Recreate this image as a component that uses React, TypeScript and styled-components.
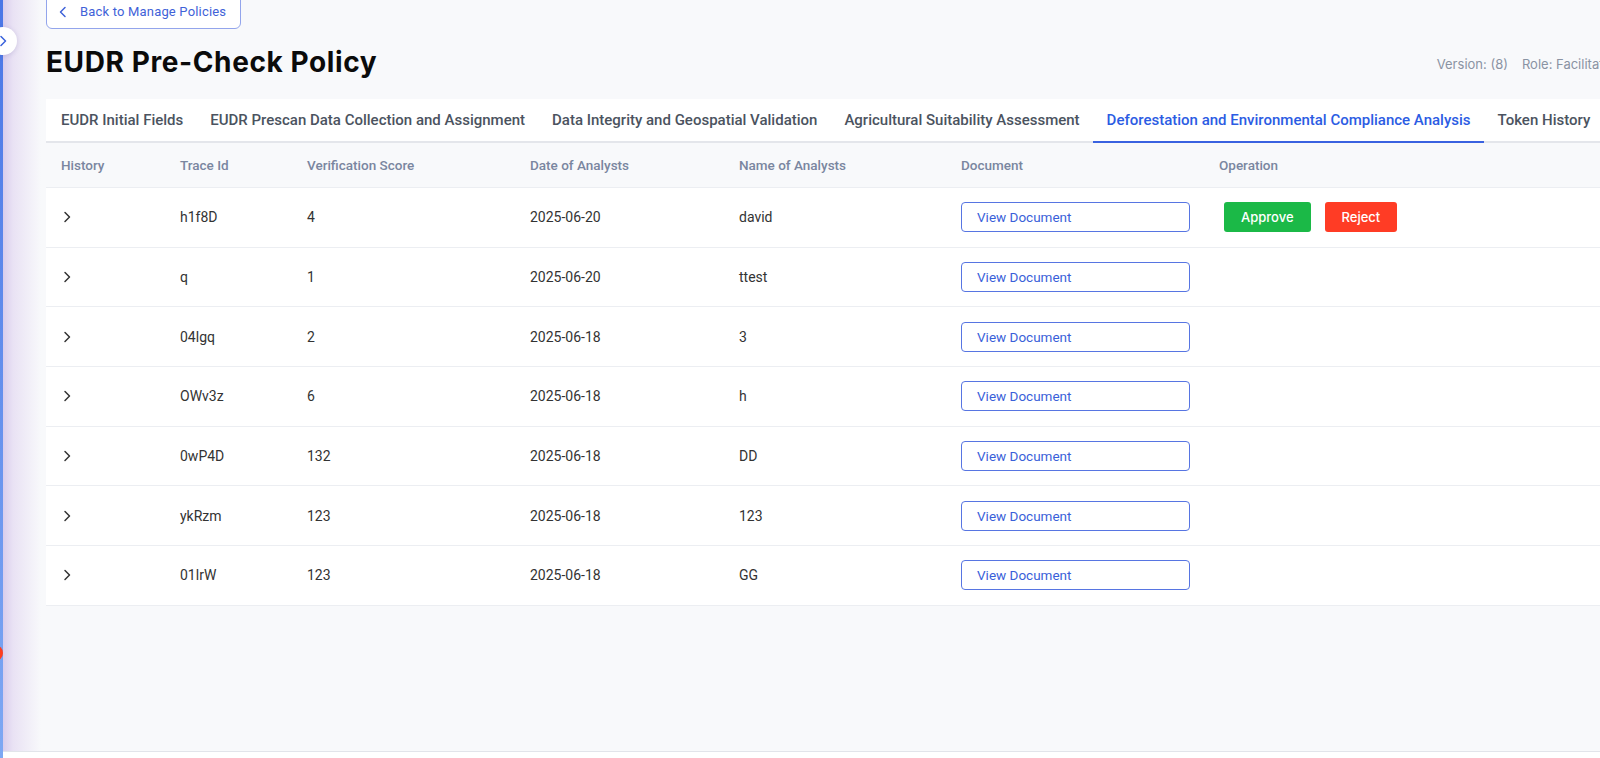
import React from "react";
import styled, { createGlobalStyle } from "styled-components";

const GlobalStyle = createGlobalStyle`
  html, body { margin: 0; padding: 0; background: #f8f9fb; }
  body { font-family: Roboto, "Liberation Sans", sans-serif; }
  * { box-sizing: border-box; }
`;

const Shell = styled.div`
  display: flex;
  width: 1600px;
  height: 758px;
  overflow: hidden;
  background: #f8f9fb;
`;

const Rail = styled.aside`
  position: relative;
  flex: 0 0 3px;
  background: linear-gradient(to bottom, #4a76e6, #7ea8f3);
  z-index: 2;
`;

const RailToggle = styled.button`
  position: absolute;
  left: -11px;
  top: 27px;
  width: 28px;
  height: 28px;
  border-radius: 50%;
  background: #fff;
  border: none;
  padding: 0;
  box-shadow: 0 1px 5px rgba(70, 60, 140, 0.18);
  display: flex;
  align-items: center;
  justify-content: center;
  color: #3a62dc;
`;

const RailBadge = styled.span`
  position: absolute;
  left: -13px;
  top: 645px;
  width: 16px;
  height: 16px;
  border-radius: 50%;
  background: #ff3d1f;
`;

const Body = styled.div`
  flex: 1;
  min-width: 0;
  display: flex;
  flex-direction: column;
`;

const Content = styled.div`
  flex: 1;
  overflow: hidden;
  display: flex;
  padding-left: 43px;
  background: linear-gradient(to right, #d9cdec 0px, #e9e2f4 10px, #f8f9fb 38px);
`;

const Footer = styled.footer`
  flex: 0 0 7px;
  border-top: 1px solid #e2e4ea;
  background: #fff;
`;

const Main = styled.main`
  flex: 0 0 1570px;
  display: flex;
  flex-direction: column;
  align-items: stretch;
`;

const BackButton = styled.button`
  align-self: flex-start;
  margin-top: -6px;
  height: 35px;
  display: flex;
  align-items: center;
  gap: 13px;
  padding: 0 14px 0 12px;
  border: 1px solid #93a5ec;
  border-radius: 6px;
  background: #fff;
  color: #3f62d8;
  font-family: Roboto, "Liberation Sans", sans-serif;
  font-size: 13px;
  letter-spacing: 0.18px;
  font-weight: 400;
  white-space: nowrap;
  cursor: pointer;
`;

const TitleRow = styled.div`
  display: flex;
  align-items: center;
  justify-content: space-between;
  margin-top: 16px;
  height: 34px;
`;

const Title = styled.h1`
  margin: 0;
  font-family: Inter, "Liberation Sans", sans-serif;
  font-size: 28px;
  font-weight: 700;
  letter-spacing: 0.6px;
  color: #0b0b0b;
  line-height: 34px;
`;

const Meta = styled.div`
  display: flex;
  gap: 14px;
  font-family: Inter, "Liberation Sans", sans-serif;
  font-size: 13px;
  color: #8a93a3;
  padding-top: 4px;
  white-space: nowrap;
`;

const TabBar = styled.nav`
  margin-top: 20px;
  display: flex;
  height: 44px;
  padding-left: 1.5px;
  background: #fff;
  border-bottom: 2px solid #e4e6eb;
`;

const Tab = styled.button<{ $active?: boolean }>`
  height: 44px;
  margin-bottom: -2px;
  padding: 0 13.5px;
  border: none;
  border-bottom: 2px solid ${(p) => (p.$active ? "#3a62e0" : "transparent")};
  background: transparent;
  font-family: Roboto, "Liberation Sans", sans-serif;
  font-size: 15px;
  font-weight: 500;
  color: ${(p) => (p.$active ? "#2c5ce3" : "#4b5360")};
  white-space: nowrap;
  cursor: pointer;
`;

const COLS = "119px 127px 223px 209px 222px 258px 1fr";

const HeadRow = styled.div`
  display: grid;
  grid-template-columns: ${COLS};
  height: 45px;
  align-items: center;
  background: #f8f9fb;
  border-bottom: 1px solid #eceef2;
`;

const HeadCell = styled.div`
  padding-left: 15px;
  font-size: 13.5px;
  font-weight: 500;
  color: #7a86a0;
`;

const Row = styled.div`
  display: grid;
  grid-template-columns: ${COLS};
  height: 59.7px;
  align-items: center;
  background: #fff;
  border-bottom: 1px solid #eceef2;
`;

const Cell = styled.div`
  padding-left: 15px;
  font-size: 14px;
  color: #333;
  display: flex;
  align-items: center;
`;

const Expand = styled.button`
  border: none;
  background: transparent;
  padding: 0 0 0 2px;
  display: flex;
  color: #333;
  cursor: pointer;
`;

const DocButton = styled.button`
  width: 229px;
  height: 30px;
  text-align: left;
  padding: 0 0 0 15px;
  border: 1px solid #5775e2;
  border-radius: 4px;
  background: #fff;
  color: #3a5fd9;
  font-family: Roboto, "Liberation Sans", sans-serif;
  font-size: 13.5px;
  font-weight: 400;
  cursor: pointer;
`;

const Actions = styled.div`
  display: flex;
  gap: 14px;
  margin-left: 5px;
`;

const ActionButton = styled.button<{ $tone: "approve" | "reject" }>`
  height: 30px;
  padding: 0 17px;
  border: none;
  border-radius: 3px;
  background: ${(p) => (p.$tone === "approve" ? "#1bb947" : "#ff3c25")};
  color: #fff;
  font-family: Inter, "Liberation Sans", sans-serif;
  font-size: 13px;
  font-weight: 500;
  cursor: pointer;
`;

const tabs = [
  "EUDR Initial Fields",
  "EUDR Prescan Data Collection and Assignment",
  "Data Integrity and Geospatial Validation",
  "Agricultural Suitability Assessment",
  "Deforestation and Environmental Compliance Analysis",
  "Token History",
];

const headers = [
  "History",
  "Trace Id",
  "Verification Score",
  "Date of Analysts",
  "Name of Analysts",
  "Document",
  "Operation",
];

const rows = [
  { id: "h1f8D", score: "4", date: "2025-06-20", name: "david", actions: true },
  { id: "q", score: "1", date: "2025-06-20", name: "ttest" },
  { id: "04lgq", score: "2", date: "2025-06-18", name: "3" },
  { id: "OWv3z", score: "6", date: "2025-06-18", name: "h" },
  { id: "0wP4D", score: "132", date: "2025-06-18", name: "DD" },
  { id: "ykRzm", score: "123", date: "2025-06-18", name: "123" },
  { id: "01lrW", score: "123", date: "2025-06-18", name: "GG" },
];

const Chevron = ({ dir = "right", w = 8, h = 12 }: { dir?: "left" | "right"; w?: number; h?: number }) => (
  <svg width={w} height={h} viewBox="0 0 8 12" fill="none" stroke="currentColor" strokeWidth="1.5" strokeLinecap="round" strokeLinejoin="round">
    {dir === "right" ? <path d="M2 1.5 6.5 6 2 10.5" /> : <path d="M6 1.5 1.5 6 6 10.5" />}
  </svg>
);

export default function App() {
  return (
    <>
      <GlobalStyle />
      <Shell>
        <Rail>
          <RailToggle aria-label="Expand sidebar">
            <Chevron w={8} h={12} />
          </RailToggle>
          <RailBadge />
        </Rail>
        <Body>
          <Content>
            <Main>
              <BackButton>
                <Chevron dir="left" w={8} h={12} />
                Back to Manage Policies
              </BackButton>
              <TitleRow>
                <Title>EUDR Pre-Check Policy</Title>
                <Meta>
                  <span>Version: (8)</span>
                  <span>Role: Facilitator</span>
                </Meta>
              </TitleRow>
              <TabBar>
                {tabs.map((t) => (
                  <Tab key={t} $active={t.startsWith("Deforestation")}>
                    {t}
                  </Tab>
                ))}
              </TabBar>
              <HeadRow>
                {headers.map((h) => (
                  <HeadCell key={h}>{h}</HeadCell>
                ))}
              </HeadRow>
              {rows.map((r) => (
                <Row key={r.id}>
                  <Cell>
                    <Expand aria-label="Expand row">
                      <Chevron />
                    </Expand>
                  </Cell>
                  <Cell>{r.id}</Cell>
                  <Cell>{r.score}</Cell>
                  <Cell>{r.date}</Cell>
                  <Cell>{r.name}</Cell>
                  <Cell>
                    <DocButton>View Document</DocButton>
                  </Cell>
                  <Cell>
                    {r.actions && (
                      <Actions>
                        <ActionButton $tone="approve">Approve</ActionButton>
                        <ActionButton $tone="reject">Reject</ActionButton>
                      </Actions>
                    )}
                  </Cell>
                </Row>
              ))}
            </Main>
          </Content>
          <Footer />
        </Body>
      </Shell>
    </>
  );
}
